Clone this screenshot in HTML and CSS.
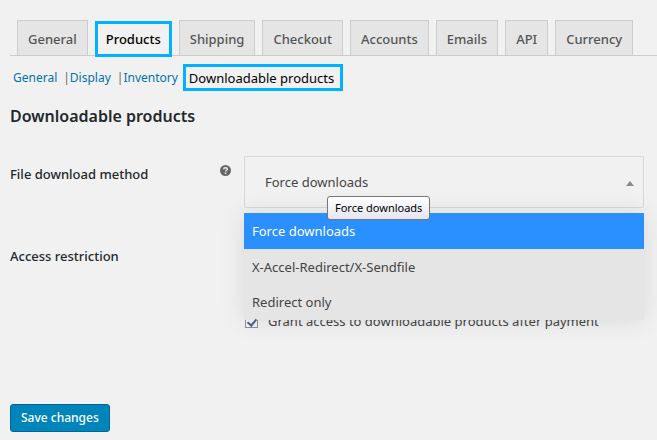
FILE: index.html
```html
<!DOCTYPE html>
<html lang="en">
<head>
    <meta charset="UTF-8">
    <meta name="viewport" content="width=device-width, initial-scale=1.0">
    <title>Downloadable products</title>
    <link rel="stylesheet" href="styles.css">
</head>
<body>

<nav class="tabs">
    <a href="#general" class="tab">General</a>
    <a href="#products" class="tab tab-active">Products</a>
    <a href="#shipping" class="tab">Shipping</a>
    <a href="#checkout" class="tab">Checkout</a>
    <a href="#accounts" class="tab">Accounts</a>
    <a href="#emails" class="tab">Emails</a>
    <a href="#api" class="tab">API</a>
    <a href="#currency" class="tab">Currency</a>
</nav>

<ul class="subnav">
    <li><a href="#products-general">General</a></li>
    <li><a href="#display">Display</a></li>
    <li><a href="#inventory">Inventory</a></li>
    <li class="current"><a href="#downloadable">Downloadable products</a></li>
</ul>

<form class="settings">
    <h2>Downloadable products</h2>

    <div class="row">
        <label class="row-title" for="method">File download method</label>
        <svg class="help" viewBox="0 0 11 11" aria-hidden="true">
            <circle cx="5.5" cy="5.5" r="5.5" fill="#666"/>
            <path d="M3.7 4.2C3.7 2.2 7.3 2.2 7.3 4.2C7.3 5.3 5.6 5.3 5.6 6.6" fill="none" stroke="#f1f1f1" stroke-width="1.4"/>
            <rect x="4.8" y="7.5" width="1.5" height="1.5" fill="#f1f1f1"/>
        </svg>
        <div class="field dropdown">
            <select id="method" name="method">
                <option selected>Force downloads</option>
                <option>X-Accel-Redirect/X-Sendfile</option>
                <option>Redirect only</option>
            </select>
            <svg class="arrow" viewBox="0 0 8 5" aria-hidden="true">
                <path d="M4 0L8 5H0Z" fill="#888"/>
            </svg>
            <ul class="menu" role="listbox">
                <li class="selected" role="option" aria-selected="true">Force downloads</li>
                <li role="option">X-Accel-Redirect/X-Sendfile</li>
                <li role="option">Redirect only</li>
            </ul>
            <span class="tooltip" role="tooltip">Force downloads</span>
        </div>
    </div>

    <div class="row">
        <span class="row-title">Access restriction</span>
        <div class="field access">
            <input type="checkbox" id="grant" name="grant" checked>
            <label for="grant">Grant access to downloadable products after payment</label>
        </div>
    </div>

    <button type="submit" class="save">Save changes</button>
</form>

</body>
</html>
```
FILE: styles.css
```css
* {
    box-sizing: border-box;
}
body {
    margin: 0;
    padding: 20px 0 8px 10px;
    background-color: #f1f1f1;
    color: #444;
    font-family: "Noto Sans", "Open Sans", sans-serif;
    font-size: 13px;
    line-height: 20px;
}
ul {
    margin: 0;
    padding: 0;
    list-style: none;
}
a {
    color: #0073aa;
    text-decoration: none;
}
.tabs {
    display: flex;
    gap: 7px;
    padding-left: 7px;
    border-bottom: 1px solid #ccc;
}
.tab {
    padding: 8px 10px 6px;
    border: 1px solid #ccc;
    border-bottom: none;
    background-color: #e5e5e5;
    color: #555;
    font-weight: 500;
}
.tab-active {
    margin: 1px 0 -2px;
    padding: 5px 8px;
    border: 3px solid #00b2ff;
    background-color: #f1f1f1;
    color: #000;
}
.subnav {
    display: flex;
    align-items: center;
    margin-top: 8px;
    padding-left: 3px;
    font-size: 12px;
}
.subnav li + li:not(.current)::before {
    content: "|";
    padding-left: 6px;
    color: #666;
}
.subnav .current {
    margin-left: 5px;
    padding: 1px 6px 0 3px;
    border: 3px solid #00b2ff;
    font-size: 13px;
}
.current a {
    color: #000;
}
h2 {
    margin: 13px 0 28px;
    color: #23282d;
    font-size: 16px;
    font-weight: 600;
    line-height: 24px;
}
.row {
    display: flex;
    align-items: flex-start;
    padding-right: 13px;
}
.row + .row {
    margin-top: 30px;
}
.row-title {
    flex: 0 0 210px;
    padding-top: 8px;
    color: #23282d;
    font-weight: 500;
}
.help {
    width: 11px;
    height: 11px;
    margin-top: 9px;
}
.field {
    flex: 1;
}
.dropdown {
    position: relative;
    margin-left: 13px;
}
select {
    display: block;
    width: 100%;
    height: 52px;
    padding: 0 20px;
    border: 1px solid #d9d9d9;
    border-radius: 2px;
    appearance: none;
    background-color: transparent;
    color: #444;
    font: inherit;
}
.arrow {
    position: absolute;
    top: 25px;
    right: 10px;
    width: 8px;
    height: 5px;
}
.menu {
    position: absolute;
    top: 57px;
    left: 0;
    right: 0;
    background-color: #e5e5e5;
    box-shadow: 0 0 24px rgba(0, 0, 0, 0.1);
}
.menu li {
    padding: 8px;
}
.menu li:last-child {
    padding: 7px 8px 8px;
}
.menu .selected {
    background-color: #2a90ff;
    color: #fff;
}
.tooltip {
    position: absolute;
    top: 40px;
    left: 83px;
    padding: 1px 7px;
    border: 1px solid #767676;
    border-radius: 3px;
    background-image: linear-gradient(#fff, #e4e5f0);
    color: #000;
    font-size: 11px;
}
.access {
    display: flex;
    align-items: center;
    gap: 10px;
    margin-left: 25px;
    padding-top: 73px;
}
input[type="checkbox"] {
    display: grid;
    place-items: center;
    width: 13px;
    height: 13px;
    margin: 0;
    border: 1px solid #8e8f8f;
    appearance: none;
    background-color: #f4f4f4;
}
input[type="checkbox"]:checked::before {
    content: "";
    width: 4px;
    height: 7px;
    border: solid #4a5f97;
    border-width: 0 2px 2px 0;
    transform: rotate(40deg);
}
.save {
    margin-top: 73px;
    padding: 3px 10px;
    border: 1px solid #006799;
    border-radius: 3px;
    background-color: #0085ba;
    color: #fff;
    font: inherit;
    font-size: 12px;
    font-weight: 500;
}
```
